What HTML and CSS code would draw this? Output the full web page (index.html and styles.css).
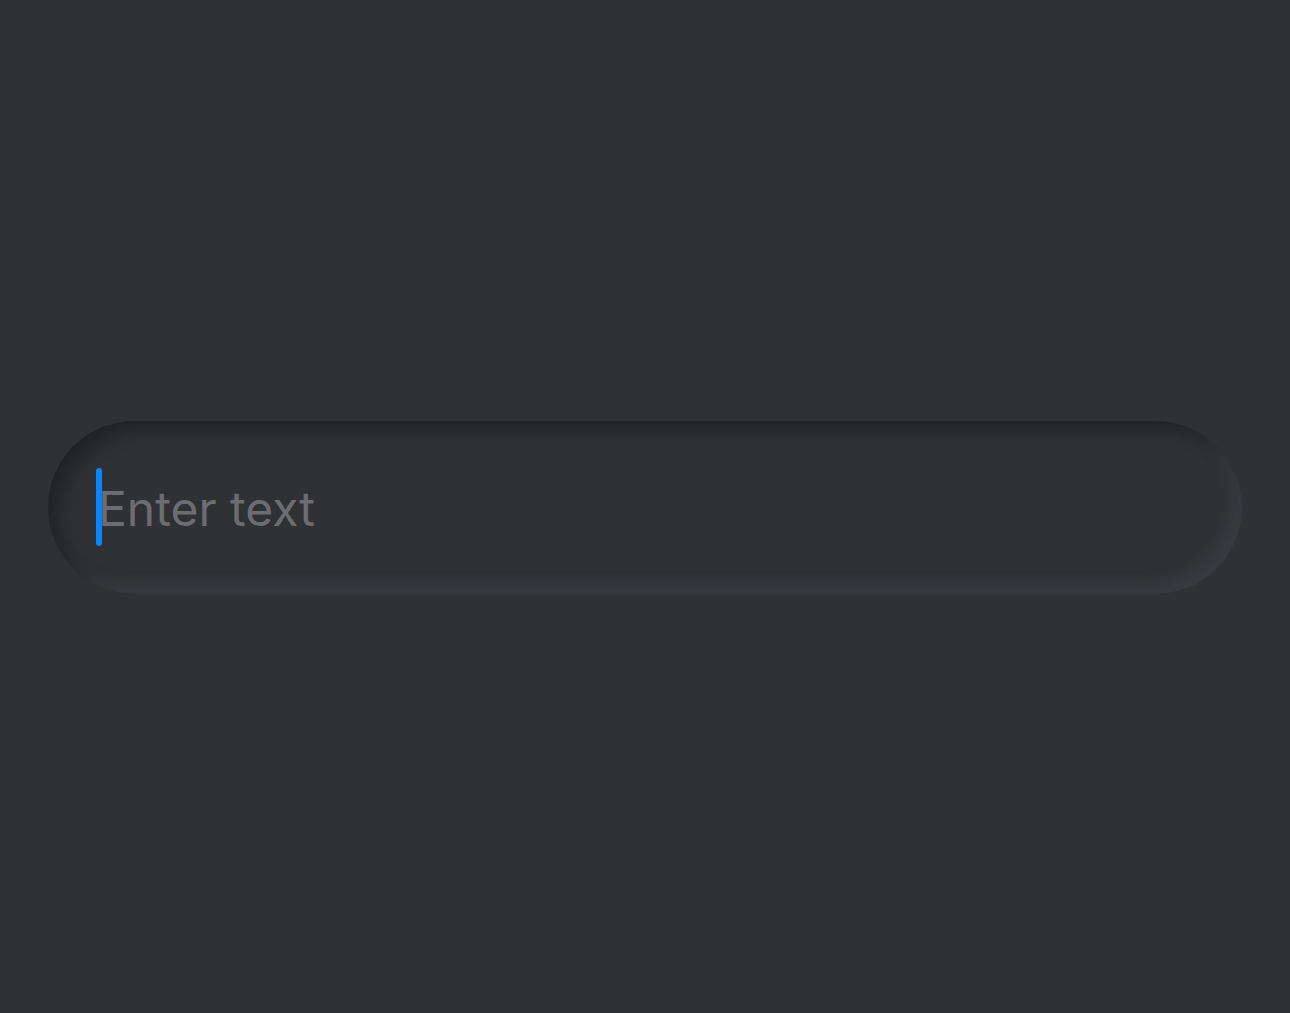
FILE: index.html
```html
<!DOCTYPE html>
<html>
<head>
<meta charset="utf-8">
<link rel="stylesheet" href="styles.css">
</head>
<body>
<main class="page">
  <label class="field">
    <span class="caret"></span>
    <span class="placeholder">Enter text</span>
  </label>
</main>
</body>
</html>
```
FILE: styles.css
```css
html, body {
  margin: 0;
  padding: 0;
  background: #303135;
  height: 100%;
}
.page {
  height: 1013px;
  display: flex;
  align-items: center;
  padding: 0 48px;
  box-sizing: border-box;
}
.field {
  flex: 1;
  height: 173px;
  margin-top: 1px;
  border-radius: 87px;
  background: #303135;
  box-shadow:
    inset 12px 10px 16px rgba(0, 0, 0, 0.28),
    inset -10px -10px 14px rgba(90, 92, 104, 0.24);
  display: flex;
  align-items: center;
  padding-left: 48px;
  box-sizing: border-box;
}
.caret {
  width: 6px;
  height: 78px;
  border-radius: 3px;
  background: #0a84ff;
  flex: none;
}
.placeholder {
  font-family: Inter, "Noto Sans", sans-serif;
  font-size: 48px;
  color: #6c6d72;
  margin-left: -4px;
  letter-spacing: 0px;
  line-height: 1;
  padding-top: 4px;
}
```
